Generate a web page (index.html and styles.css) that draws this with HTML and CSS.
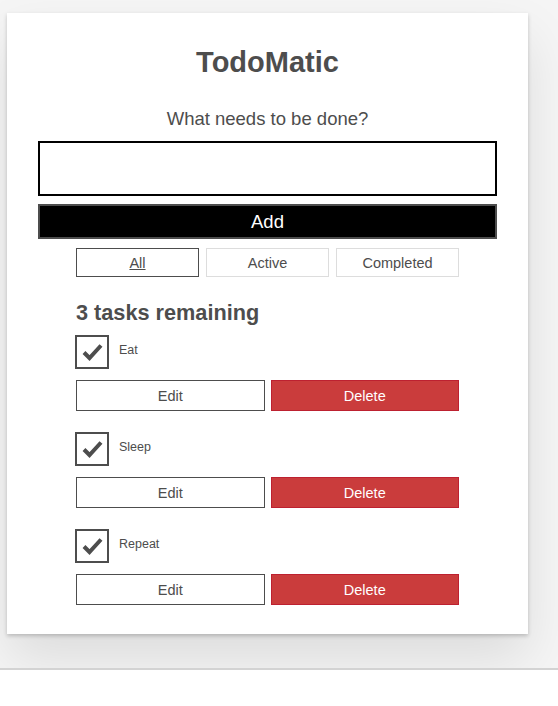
FILE: index.html
```html
<!DOCTYPE html>
<html lang="en">
<head>
<meta charset="utf-8">
<title>TodoMatic</title>
<link rel="stylesheet" href="styles.css">
</head>
<body>
<div class="page">
  <div class="todoapp">
    <h1 class="title">TodoMatic</h1>
    <form class="new-todo">
      <label class="new-label" for="new-todo-input">What needs to be done?</label>
      <input class="new-input" id="new-todo-input" type="text" autocomplete="off">
      <button class="btn-add" type="button">Add</button>
    </form>
    <div class="filters">
      <button class="filter filter-active" type="button"><span class="u">All</span></button>
      <button class="filter" type="button">Active</button>
      <button class="filter" type="button">Completed</button>
    </div>
    <h2 class="remaining">3 tasks remaining</h2>
    <ul class="todo-list">
      <li class="todo">
        <div class="todo-check">
          <span class="box"><svg width="30" height="30" viewBox="0 0 30 30"><path d="M7 15.5 L12.5 21 L24 8.5" fill="none" stroke="#4d4d4d" stroke-width="4"/></svg></span>
          <span class="todo-label">Eat</span>
        </div>
        <div class="todo-btns">
          <button class="btn btn-edit" type="button">Edit</button>
          <button class="btn btn-danger" type="button">Delete</button>
        </div>
      </li>
      <li class="todo">
        <div class="todo-check">
          <span class="box"><svg width="30" height="30" viewBox="0 0 30 30"><path d="M7 15.5 L12.5 21 L24 8.5" fill="none" stroke="#4d4d4d" stroke-width="4"/></svg></span>
          <span class="todo-label">Sleep</span>
        </div>
        <div class="todo-btns">
          <button class="btn btn-edit" type="button">Edit</button>
          <button class="btn btn-danger" type="button">Delete</button>
        </div>
      </li>
      <li class="todo">
        <div class="todo-check">
          <span class="box"><svg width="30" height="30" viewBox="0 0 30 30"><path d="M7 15.5 L12.5 21 L24 8.5" fill="none" stroke="#4d4d4d" stroke-width="4"/></svg></span>
          <span class="todo-label">Repeat</span>
        </div>
        <div class="todo-btns">
          <button class="btn btn-edit" type="button">Edit</button>
          <button class="btn btn-danger" type="button">Delete</button>
        </div>
      </li>
    </ul>
  </div>
</div>
</body>
</html>
```
FILE: styles.css
```css
* { box-sizing: border-box; }
html, body { margin: 0; padding: 0; background: #fff; }
body {
  font-family: "Liberation Sans", Arial, Helvetica, sans-serif;
  color: #4d4d4d;
}
.page {
  background: #f5f5f5;
  height: 670px;
  padding: 13px 30px 0 7px;
  border-bottom: 2px solid #d3d3d3;
  overflow: hidden;
}
.todoapp {
  width: 521px;
  background: #fff;
  padding: 32px 31px 29px;
  box-shadow: 0 2px 4px 0 rgba(0,0,0,0.2), 0 25px 50px 0 rgba(0,0,0,0.1);
}
.title {
  margin: 0;
  font-size: 29px;
  line-height: 34px;
  font-weight: bold;
  text-align: center;
  color: #4d4d4d;
}
.new-todo {
  display: flex;
  flex-direction: column;
  margin-top: 29px;
}
.new-label {
  font-size: 18.5px;
  line-height: 22px;
  text-align: center;
  margin-bottom: 11px;
}
.new-input {
  height: 55px;
  border: 2px solid #000;
  background: #fff;
  margin: 0;
  padding: 0 8px;
  font: inherit;
}
.btn-add {
  margin-top: 8px;
  height: 35px;
  background: #000;
  color: #fff;
  border: 2px solid #4d4d4d;
  font-family: inherit;
  font-size: 18.5px;
  padding: 0;
}
.filters {
  display: flex;
  gap: 7px;
  margin: 9px 38px 0;
}
.filter {
  flex: 1;
  height: 29px;
  background: #fff;
  border: 1px solid #ddd;
  color: #4d4d4d;
  font-family: inherit;
  font-size: 14.5px;
  padding: 0;
}
.filter-active { border-color: #4d4d4d; }
.u { text-decoration: underline; }
.remaining {
  margin: 23px 38px 0;
  font-size: 21.7px;
  line-height: 26px;
  font-weight: bold;
}
.todo-list {
  list-style: none;
  margin: 9px 38px 0;
  padding: 0;
}
.todo { margin-bottom: 21px; }
.todo:last-child { margin-bottom: 0; }
.todo-check {
  display: flex;
  align-items: flex-start;
  gap: 10px;
  margin-left: -1px;
}
.box {
  width: 34px;
  height: 34px;
  border: 2px solid #4d4d4d;
  display: flex;
  align-items: center;
  justify-content: center;
}
.box svg { display: block; }
.todo-label {
  font-size: 12.5px;
  line-height: 14px;
  padding-top: 8px;
  color: #4d4d4d;
}
.todo-btns {
  display: flex;
  gap: 6px;
  margin-top: 11px;
}
.btn {
  flex: 1;
  height: 31px;
  font-family: inherit;
  font-size: 14.5px;
  padding: 0;
}
.btn-edit {
  background: #fff;
  color: #4d4d4d;
  border: 1.5px solid #4d4d4d;
}
.btn-danger {
  background: #ca3c3c;
  color: #fff;
  border: 1px solid #bd2130;
}
```
